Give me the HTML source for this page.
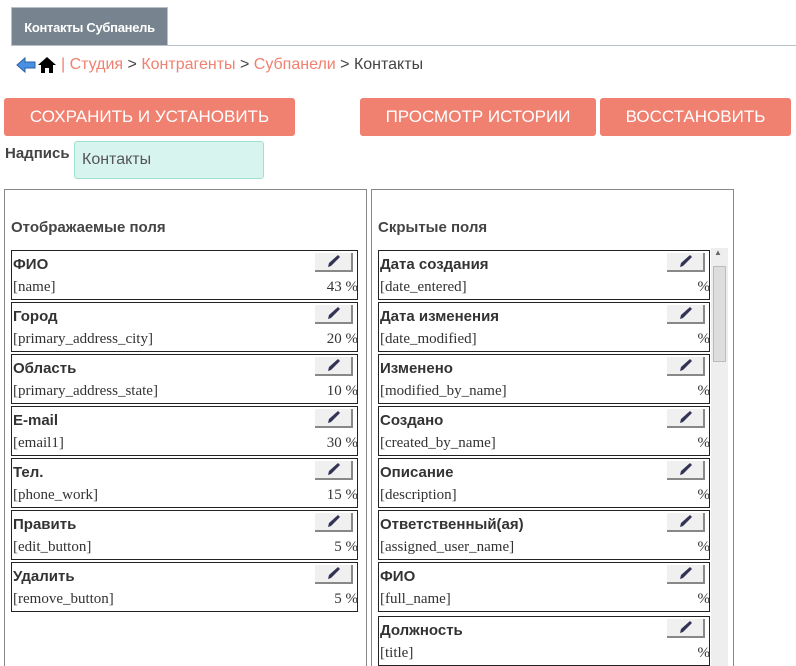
<!DOCTYPE html>
<html style="overflow:hidden"><head><meta charset="utf-8"><style>
html,body{margin:0;width:796px;height:666px;overflow:hidden}
body{background:#fff;font-family:"Liberation Sans",sans-serif;position:relative;color:#444}
.a{position:absolute}
.tab{left:11px;top:7px;width:157px;height:39px;background:#778490;color:#fff;font-weight:bold;font-size:13px;line-height:39px;text-align:center;border:1px solid #b8c0c8;box-sizing:border-box;letter-spacing:-0.3px}
.line{left:168px;top:45px;width:628px;height:1px;background:#b8c0c8}
.bc{left:61px;top:56px;font-size:16px;color:#444;white-space:nowrap}
.bc .l{color:#f08070}
.btn{background:#f08070;color:#fff;font-size:17px;text-align:center;line-height:38px;height:38px;border-radius:3px;top:98px}
.panel{border:1px solid #888;top:189px;height:490px;box-sizing:border-box}
.ph{font-weight:bold;font-size:15px;color:#444;top:219px}
.it{border:1px solid #222;box-sizing:border-box;height:50px;background:#fff}
.it b{position:absolute;left:1px;top:5px;font-size:15px;color:#333}
.it i{position:absolute;left:1px;top:28px;font-style:normal;font-family:"Liberation Serif",serif;font-size:15px;color:#333}
.it s{position:absolute;right:-1px;top:28px;text-decoration:none;font-family:"Liberation Serif",serif;font-size:15px;color:#333}
.e{position:absolute;right:4px;top:2px;width:38px;height:19px;background:#f0f0f0;border-right:2px solid #888;border-bottom:2px solid #888;box-sizing:border-box}
</style></head><body>
<div class="a tab">Контакты Субпанель</div>
<div class="a line"></div>
<svg class="a" style="left:16px;top:56px" width="42" height="18" viewBox="0 0 42 18">
<path d="M1 9 L9 2 L9 6 L19 6 L19 12 L9 12 L9 16 Z" fill="#4a90e2" stroke="#2a5fa8" stroke-width="1"/>
<path d="M22 9 L31 1 L40 9 L37 9 L37 17 L33 17 L33 12 L29 12 L29 17 L25 17 L25 9 Z" fill="#000"/>
</svg>
<div class="a bc"><span class="l">| Студия</span> &gt; <span class="l">Контрагенты</span> &gt; <span class="l">Субпанели</span> &gt; Контакты</div>
<div class="a btn" style="left:4px;width:291px">СОХРАНИТЬ И УСТАНОВИТЬ</div>
<div class="a btn" style="left:360px;width:236px">ПРОСМОТР ИСТОРИИ</div>
<div class="a btn" style="left:600px;width:191px">ВОССТАНОВИТЬ</div>
<div class="a" style="left:5px;top:145px;font-weight:bold;font-size:15px;color:#444">Надпись</div>
<div class="a" style="left:74px;top:141px;width:190px;height:38px;background:#d8f4ee;border:1px solid #a0e0d0;border-radius:3px;box-sizing:border-box;font-size:16px;line-height:36px;padding-left:7px;color:#555">Контакты</div>
<div class="a panel" style="left:4px;width:363px"></div>
<div class="a panel" style="left:371px;width:363px"></div>
<div class="a ph" style="left:11px">Отображаемые поля</div>
<div class="a ph" style="left:378px">Скрытые поля</div>
<div class="a" style="left:711px;top:248px;width:17px;height:420px;background:#eee"></div>
<div class="a" style="left:713px;top:266px;width:13px;height:96px;background:#ddd;border:1px solid #bbb;box-sizing:border-box"></div>
<div class="a" style="left:714px;top:248px;font-size:8px;color:#666">▲</div>
<div id="L"></div>
<script>
var P='<div class="e"><svg width="36" height="17" style="position:absolute;left:0;top:0"><path d="M13 14 L14 10 L23 2 L25 4 L16 13 Z" fill="#335"/></svg></div>';
var L=[["ФИО","name","43 %"],["Город","primary_address_city","20 %"],["Область","primary_address_state","10 %"],["E-mail","email1","30 %"],["Тел.","phone_work","15 %"],["Править","edit_button","5 %"],["Удалить","remove_button","5 %"]];
var R=[["Дата создания","date_entered"],["Дата изменения","date_modified"],["Изменено","modified_by_name"],["Создано","created_by_name"],["Описание","description"],["Ответственный(ая)","assigned_user_name"],["ФИО","full_name"],["Должность","title"]];
var h="";
L.forEach(function(r,i){h+='<div class="a it" style="left:11px;top:'+(250+52*i)+'px;width:347px"><b>'+r[0]+'</b>'+P+'<i>['+r[1]+']</i><s>'+r[2]+'</s></div>'});
R.forEach(function(r,i){h+='<div class="a it" style="left:378px;top:'+(250+52*i+(i==7?2:0))+'px;width:332px"><b>'+r[0]+'</b>'+P+'<i>['+r[1]+']</i><s>%</s></div>'});
document.getElementById("L").innerHTML=h;
</script>
</body></html>
